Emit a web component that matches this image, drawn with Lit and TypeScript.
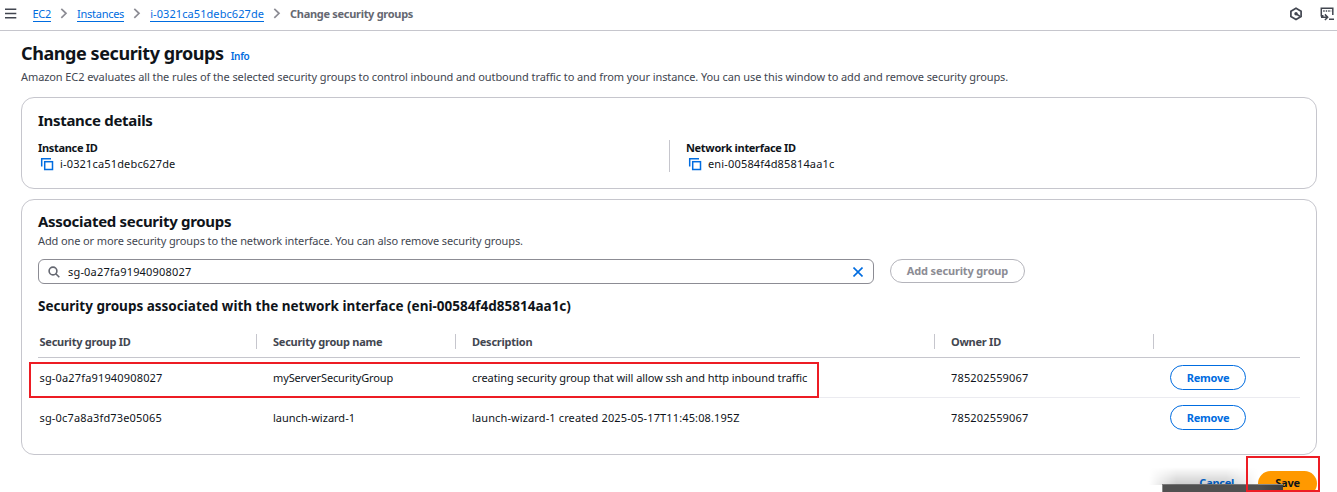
import { LitElement, html, css } from "lit";
import { customElement } from "lit/decorators.js";

const copyIcon = html`<svg class="copy" width="14" height="14" viewBox="0 0 14 14" fill="none" stroke="#006ce0" stroke-width="1.5"><path d="M1.7 9.5V1.7H11"/><rect x="4.7" y="4.7" width="7.8" height="7.8"/></svg>`;
const chevron = html`<svg class="chev" width="8" height="11" viewBox="0 0 8 11" fill="none" stroke="#8c8c94" stroke-width="1.7"><path d="M1.3 .8l4.7 4.5L1.3 9.8"/></svg>`;

const rows = [
  { id: "sg-0a27fa91940908027", name: "myServerSecurityGroup", desc: "creating security group that will allow ssh and http inbound traffic", owner: "785202559067" },
  { id: "sg-0c7a8a3fd73e05065", name: "launch-wizard-1", desc: "launch-wizard-1 created 2025-05-17T11:45:08.195Z", owner: "785202559067" },
];

@customElement("app-root")
export class AppRoot extends LitElement {
  static styles = css`
    :host { display: block; position: relative; width: 1337px; height: 492px; overflow: hidden; background: #fff; color: #0f141a; font: 11px/16px "Noto Sans", "Open Sans", sans-serif; }
    * { box-sizing: border-box; }
    span, a, h1, h2, h3, p, button { white-space: nowrap; }
    h1, h2, h3, p { margin: 0; }
    svg { display: block; flex: none; }
    a { color: #006ce0; }
    .bar { display: flex; align-items: center; height: 31px; padding: 0 3px 3px 5px; border-bottom: 1px solid #c6c6cd; }
    .crumbs { display: flex; align-items: center; margin-left: 15.5px; flex: 1; }
    .crumbs a { text-decoration: none; border-bottom: 1px solid #006ce0; line-height: 14px; padding-top: 1px; letter-spacing: -.27px; }
    .crumbs .long { letter-spacing: .08px; }
    .chev { margin: 0 9px; }
    .crumbs b { color: #656871; letter-spacing: -.3px; }
    .tools { display: flex; gap: 17px; }
    main { padding: 10px 20px 0 21px; }
    .title { display: flex; align-items: baseline; gap: 7px; height: 25px; }
    h1 { font-size: 18px; line-height: 24px; letter-spacing: -.42px; }
    .info { font-weight: 600; font-size: 10px; letter-spacing: -.3px; }
    .sub { color: #424650; letter-spacing: -.11px; }
    .intro { margin-top: 3px; letter-spacing: -.09px; }
    .card { border: 1px solid #c6c6cd; border-radius: 13px; padding: 0 16px; }
    .details { margin-top: 12px; height: 92px; padding-top: 12px; }
    h2 { font-size: 15px; line-height: 20px; letter-spacing: -.3px; }
    .cols { display: grid; grid-template-columns: 631px 1fr; margin-top: 10px; }
    .net { border-left: 1px solid #c6c6cd; padding-left: 16px; height: 32px; }
    .label { display: block; font-weight: 700; letter-spacing: -.32px; }
    .value { display: flex; align-items: center; gap: 6px; padding-left: 2px; letter-spacing: .16px; }
    .groups { margin-top: 10px; height: 256px; padding-top: 11px; }
    .groups .sub { margin-top: 2px; }
    .search { display: flex; margin-top: 10px; gap: 16px; }
    .field { display: flex; align-items: center; width: 836px; height: 25px; border: 1px solid #8c8c94; border-radius: 6px; padding: 0 10px 0 9px; gap: 8px; letter-spacing: .18px; }
    .field span { flex: 1; }
    button { font: 700 11px/16px "Noto Sans", "Open Sans", sans-serif; letter-spacing: -.25px; background: #fff; border: 1px solid #8c8c94; border-radius: 13px; height: 24px; padding: 0; color: #8c8c94; }
    .add { width: 135px; border-color: #b4b4bb; letter-spacing: -.15px; }
    h3 { font-size: 13.5px; line-height: 18px; margin-top: 13px; }
    .row { display: grid; grid-template-columns: 218px 199px 479px 219px 1fr; height: 40px; align-items: center; border-bottom: 1px solid #ebebf0; letter-spacing: .16px; }
    .row > span { padding-left: 1.5px; }
    .row > span + span { padding-left: 17px; }
    .row .name { letter-spacing: -.13px; }
    .row .name.narrow { letter-spacing: 0; }
    .row .desc { letter-spacing: -.07px; }
    .row .desc.narrow { letter-spacing: .12px; }
    .head { height: 32px; margin-top: 11px; border-color: #c6c6cd; font-weight: 700; color: #424650; letter-spacing: -.25px; }
    .head > span { height: 15px; line-height: 15px; }
    .head > span + span { border-left: 1px solid #c6c6cd; padding-left: 16px; }
    .row:last-child { border-color: transparent; }
    .remove { width: 76px; height: 25px; border: 1.5px solid #006ce0; color: #006ce0; display: block; }
    .foot { display: flex; justify-content: flex-end; align-items: center; margin-top: 16px; gap: 24px; }
    .cancel { color: #006ce0; font-weight: 700; letter-spacing: -.28px; padding-bottom: 1px; }
    .save { background: #ff9900; border: 0; color: #0f141a; width: 59px; height: 25px; padding-bottom: 1px; }
    .mark { position: absolute; border: 2px solid #ed1c24; }
    .mark-row { left: 29px; top: 362px; width: 790px; height: 36px; }
    .mark-save { left: 1246px; top: 456px; width: 74px; height: 36px; }
    .shade { position: absolute; left: 1162px; top: 484px; width: 121px; height: 8px; background: linear-gradient(90deg, #505050 80%, #3c3c3c); border: 1px solid #888; border-width: 1px 0 0 1px; }
    .shade::before { content: ""; position: absolute; left: -14px; bottom: 100%; width: 110px; height: 18px; background: linear-gradient(0deg, rgba(0,0,0,.2), rgba(0,0,0,0)); -webkit-mask-image: linear-gradient(90deg, transparent, #000 25%, #000 70%, transparent); mask-image: linear-gradient(90deg, transparent, #000 25%, #000 70%, transparent); }
  `;
  render() {
    return html`
      <nav class="bar">
        <svg width="12" height="12" viewBox="0 0 12 12" stroke="#424650" stroke-width="1.6"><path d="M0 1.3h11.3M0 5.5h11.3M0 9.7h11.3"/></svg>
        <div class="crumbs"><a>EC2</a>${chevron}<a>Instances</a>${chevron}<a class="long">i-0321ca51debc627de</a>${chevron}<b>Change security groups</b></div>
        <div class="tools">
          <svg width="14" height="14" viewBox="0 0 14 14" fill="none" stroke="#424650" stroke-width="1.7"><path d="M7 1.3l5.1 2.9v5.4L7 12.500 1.900 9.600V4.200z"/><circle cx="7" cy="6.8" r="1.7" fill="#424650" stroke="none"/><path d="M7 6.800l4 2.600"/></svg>
          <svg width="14" height="14" viewBox="0 0 14 14" fill="none" stroke="#424650" stroke-width="1.5"><path d="M3.500 8.700H1.300V1.300H12.800v6.700M1 10.200h6M4.900 7.400l2.800 2.800-2.800 2.800M9 12.300h5"/><path d="M3.200 3.900h8" stroke-dasharray="1.5 1"/></svg>
        </div>
      </nav>
      <main>
        <div class="title"><h1>Change security groups</h1><a class="info">Info</a></div>
        <p class="sub intro">Amazon EC2 evaluates all the rules of the selected security groups to control inbound and outbound traffic to and from your instance. You can use this window to add and remove security groups.</p>
        <section class="card details">
          <h2>Instance details</h2>
          <div class="cols">
            <div><span class="label">Instance ID</span><div class="value">${copyIcon}<span>i-0321ca51debc627de</span></div></div>
            <div class="net"><span class="label">Network interface ID</span><div class="value">${copyIcon}<span>eni-00584f4d85814aa1c</span></div></div>
          </div>
        </section>
        <section class="card groups">
          <h2>Associated security groups</h2>
          <p class="sub">Add one or more security groups to the network interface. You can also remove security groups.</p>
          <div class="search">
            <div class="field">
              <svg width="12" height="12" viewBox="0 0 12 12" fill="none" stroke="#656871" stroke-width="1.6"><circle cx="5" cy="5" r="3.9"/><path d="M7.8 7.8l3.5 3.5"/></svg>
              <span>sg-0a27fa91940908027</span>
              <svg width="10" height="10" viewBox="0 0 10 10" stroke="#006ce0" stroke-width="1.6"><path d="M.5 .5l9 9M9.5 .5l-9 9"/></svg>
            </div>
            <button class="add">Add security group</button>
          </div>
          <h3>Security groups associated with the network interface (eni-00584f4d85814aa1c)</h3>
          <div>
            <div class="row head"><span>Security group ID</span><span>Security group name</span><span>Description</span><span>Owner ID</span><span></span></div>
            ${rows.map((r, i) => html`<div class="row"><span>${r.id}</span><span class="name ${i ? "narrow" : ""}">${r.name}</span><span class="desc ${i ? "narrow" : ""}">${r.desc}</span><span>${r.owner}</span><span><button class="remove">Remove</button></span></div>`)}
          </div>
        </section>
        <div class="foot"><span class="cancel">Cancel</span><button class="save">Save</button></div>
      </main>
      <div class="shade"></div>
      <div class="mark mark-row"></div>
      <div class="mark mark-save"></div>
    `;
  }
}
